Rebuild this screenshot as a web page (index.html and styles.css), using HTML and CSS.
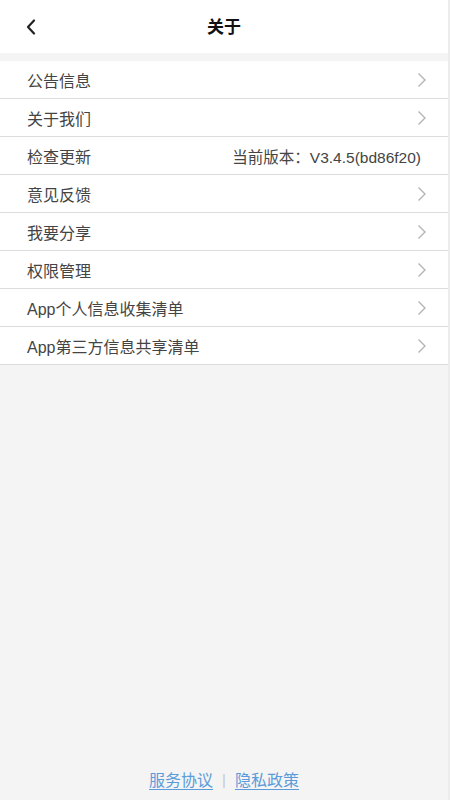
FILE: index.html
```html
<!DOCTYPE html>
<html lang="zh">
<head>
<meta charset="utf-8">
<link rel="stylesheet" href="styles.css">
</head>
<body>
<div class="page">
  <header class="topbar">
    <svg class="back" width="12" height="16" viewBox="0 0 12 16"><path d="M9 1.5 L3 8 L9 14.5" fill="none" stroke="#222" stroke-width="2.2" stroke-linecap="round" stroke-linejoin="round"/></svg>
    <h1 class="title">关于</h1>
  </header>
  <div class="gap"></div>
  <ul class="list">
    <li class="row"><span class="label">公告信息</span><svg class="chev" width="10" height="16" viewBox="0 0 10 16"><path d="M1.5 1.5 L8 8 L1.5 14.5" fill="none" stroke="#b4b4b4" stroke-width="1.4"/></svg></li>
    <li class="row"><span class="label">关于我们</span><svg class="chev" width="10" height="16" viewBox="0 0 10 16"><path d="M1.5 1.5 L8 8 L1.5 14.5" fill="none" stroke="#b4b4b4" stroke-width="1.4"/></svg></li>
    <li class="row"><span class="label">检查更新</span><span class="version">当前版本：V3.4.5(bd86f20)</span></li>
    <li class="row"><span class="label">意见反馈</span><svg class="chev" width="10" height="16" viewBox="0 0 10 16"><path d="M1.5 1.5 L8 8 L1.5 14.5" fill="none" stroke="#b4b4b4" stroke-width="1.4"/></svg></li>
    <li class="row"><span class="label">我要分享</span><svg class="chev" width="10" height="16" viewBox="0 0 10 16"><path d="M1.5 1.5 L8 8 L1.5 14.5" fill="none" stroke="#b4b4b4" stroke-width="1.4"/></svg></li>
    <li class="row"><span class="label">权限管理</span><svg class="chev" width="10" height="16" viewBox="0 0 10 16"><path d="M1.5 1.5 L8 8 L1.5 14.5" fill="none" stroke="#b4b4b4" stroke-width="1.4"/></svg></li>
    <li class="row"><span class="label">App个人信息收集清单</span><svg class="chev" width="10" height="16" viewBox="0 0 10 16"><path d="M1.5 1.5 L8 8 L1.5 14.5" fill="none" stroke="#b4b4b4" stroke-width="1.4"/></svg></li>
    <li class="row"><span class="label">App第三方信息共享清单</span><svg class="chev" width="10" height="16" viewBox="0 0 10 16"><path d="M1.5 1.5 L8 8 L1.5 14.5" fill="none" stroke="#b4b4b4" stroke-width="1.4"/></svg></li>
  </ul>
  <div class="spacer"></div>
  <footer class="footer">
    <a class="link" href="#">服务协议</a>
    <span class="sep">|</span>
    <a class="link" href="#">隐私政策</a>
  </footer>
</div>
</body>
</html>
```
FILE: styles.css
```css
html, body {
  margin: 0;
  padding: 0;
}
body {
  font-family: "Liberation Sans", "Noto Sans CJK SC", sans-serif;
  background: #f4f4f4;
}
.page {
  width: 450px;
  height: 800px;
  display: flex;
  flex-direction: column;
  background: #f4f4f4;
  box-sizing: border-box;
  border-right: 2px solid #ececec;
}
.topbar {
  height: 53px;
  background: #fff;
  display: flex;
  align-items: center;
  position: relative;
  padding-left: 25px;
  flex-shrink: 0;
}
.back {
  display: block;
}
.title {
  position: absolute;
  left: 0;
  right: 0;
  top: 0;
  margin: 0;
  line-height: 56px;
  text-align: center;
  font-size: 17px;
  font-weight: 700;
  color: #111;
  pointer-events: none;
}
.gap {
  height: 8px;
  flex-shrink: 0;
}
.list {
  list-style: none;
  margin: 0;
  padding: 0;
  background: #fff;
}
.row {
  height: 37px;
  border-bottom: 1px solid #dcdcdc;
  display: flex;
  align-items: center;
  justify-content: space-between;
  padding: 0 21px 0 27px;
}
.label {
  font-size: 16px;
  color: #444;
}
.version {
  font-size: 15.5px;
  color: #444;
  margin-right: 6px;
}
.chev {
  display: block;
}
.spacer {
  flex: 1;
}
.footer {
  height: 42px;
  display: flex;
  align-items: center;
  justify-content: center;
  gap: 9px;
  padding-bottom: 0;
}
.link {
  font-size: 16px;
  color: #5b9bd9;
  text-decoration: underline;
  text-underline-offset: 3px;
}
.sep {
  color: #c8c8c8;
  font-size: 15px;
}
```
